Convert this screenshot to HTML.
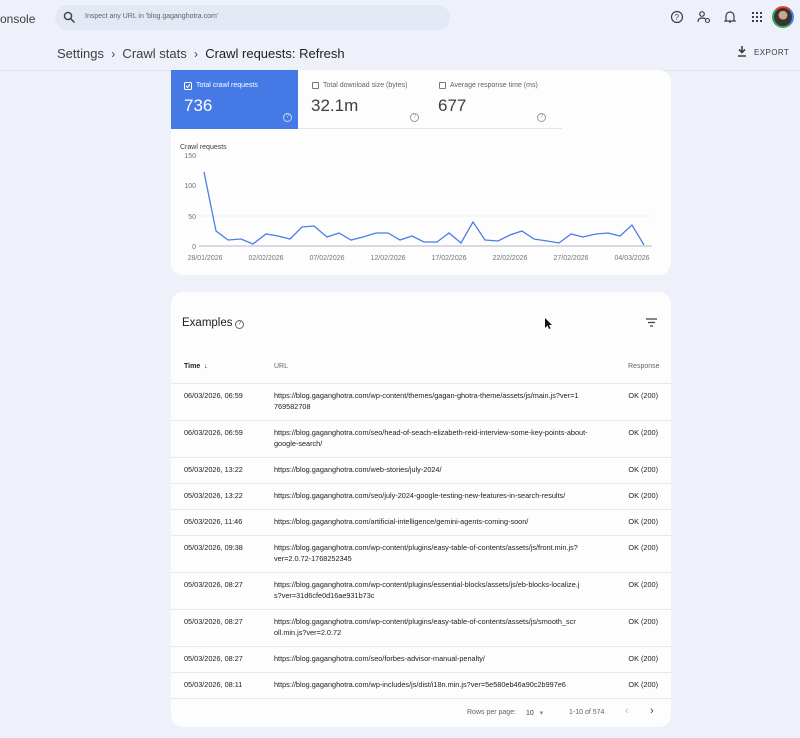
<!DOCTYPE html>
<html><head><meta charset="utf-8"><style>
*{margin:0;padding:0;box-sizing:border-box}
body{width:800px;height:738px;overflow:hidden;background:#eef1f9;font-family:"Liberation Sans",sans-serif;position:relative;color:#202124}
.a{position:absolute}
.card{position:absolute;background:#fdfdfe;border-radius:12px}
.row{position:absolute;left:171px;width:500px;border-top:1px solid #e6e8ee;font-size:7.3px;color:#202124;height:1px}
.row div{position:absolute;top:6px;white-space:nowrap;line-height:11px}
.row .t{left:13px}
.row .u{left:103px}
.row .r{right:13px}
.q{position:absolute;width:9px;height:9px;border:1px solid #999;border-radius:50%;font-size:6px;line-height:7px;text-align:center;color:#999}
</style></head><body>
<div class="a" style="left:0;top:12px;font-size:12px;color:#3c4043">onsole</div>
<div class="a" style="left:55px;top:5px;width:395px;height:25px;background:#e3e8f5;border-radius:13px"></div>
<svg class="a" style="left:63px;top:11px" width="13" height="13" viewBox="0 0 13 13"><circle cx="5" cy="5" r="3.6" fill="none" stroke="#3c4043" stroke-width="1.4"/><line x1="7.6" y1="7.6" x2="11.5" y2="11.5" stroke="#3c4043" stroke-width="1.5"/></svg>
<div class="a" style="left:85px;top:13px;font-size:7px;color:#5f6368">Inspect any URL in 'blog.gaganghotra.com'</div>
<svg class="a" style="left:670px;top:10px" width="14" height="14"><circle cx="7" cy="7" r="5.5" fill="none" stroke="#3c4043" stroke-width="1.2"/><text x="4.6" y="9.8" font-size="8" fill="#3c4043" font-family="Liberation Sans">?</text></svg>
<svg class="a" style="left:697px;top:10px" width="14" height="14"><circle cx="5" cy="4" r="2.3" fill="none" stroke="#3c4043" stroke-width="1.2"/><path d="M1 12c0-3 2-4 4-4s3 .5 3.5 1" fill="none" stroke="#3c4043" stroke-width="1.2"/><circle cx="10.5" cy="10.5" r="2" fill="none" stroke="#3c4043" stroke-width="1.1"/></svg>
<svg class="a" style="left:724px;top:10px" width="12" height="14"><path d="M2 10V6a4 4 0 018 0v4l1 1H1zM5 12h2" fill="none" stroke="#3c4043" stroke-width="1.2"/></svg>
<svg class="a" style="left:752px;top:12px" width="10" height="10" fill="#3c4043"><rect x="0" y="0" width="2" height="2"/><rect x="4" y="0" width="2" height="2"/><rect x="8" y="0" width="2" height="2"/><rect x="0" y="4" width="2" height="2"/><rect x="4" y="4" width="2" height="2"/><rect x="8" y="4" width="2" height="2"/><rect x="0" y="8" width="2" height="2"/><rect x="4" y="8" width="2" height="2"/><rect x="8" y="8" width="2" height="2"/></svg>
<div class="a" style="left:772px;top:6px;width:22px;height:22px;border-radius:50%;border:2px solid #34a853;border-top-color:#ea4335;border-right-color:#4285f4;background:radial-gradient(circle at 50% 40%,#c9a68a 0 30%,#3b3430 32%)"></div>
<div class="a" style="left:57px;top:46px;font-size:13px;color:#3c4043">Settings &nbsp;<span style="font-size:12px">›</span>&nbsp; Crawl stats &nbsp;<span style="font-size:12px">›</span>&nbsp; <span style="color:#202124">Crawl requests: Refresh</span></div>
<svg class="a" style="left:737px;top:46px" width="10" height="11"><path d="M5 0v6M2 3.5L5 6.5 8 3.5M1 10h8" fill="none" stroke="#3c4043" stroke-width="1.6"/></svg>
<div class="a" style="left:754px;top:48px;font-size:8px;color:#3c4043;letter-spacing:.4px">EXPORT</div>
<div class="a" style="left:0;top:70px;width:800px;height:1px;background:#dfe2ea"></div>

<div class="card" style="left:171px;top:70px;width:500px;height:205px;border-radius:0 12px 12px 12px"></div>
<div class="a" style="left:171px;top:70px;width:127px;height:59px;background:#4479e6"></div>
<div class="a" style="left:298px;top:128px;width:264px;height:1px;background:#e3e5ea"></div>
<svg class="a" style="left:184px;top:82px" width="8" height="8"><rect x=".5" y=".5" width="7" height="7" rx="1" fill="none" stroke="#fff"/><path d="M2 4l1.5 1.5L6 2.5" fill="none" stroke="#fff"/></svg>
<div class="a" style="left:196px;top:82px;font-size:7px;color:#fff">Total crawl requests</div>
<div class="a" style="left:184px;top:96px;font-size:17px;color:#fff">736</div>
<div class="q" style="left:283px;top:113px;border-color:#c9d7f7;color:#c9d7f7">?</div>
<div class="a" style="left:312px;top:82px;width:7px;height:7px;border:1px solid #777;border-radius:1px"></div>
<div class="a" style="left:323px;top:82px;font-size:7px;color:#5f6368">Total download size (bytes)</div>
<div class="a" style="left:311px;top:96px;font-size:17px;color:#3c4043">32.1m</div>
<div class="q" style="left:410px;top:113px">?</div>
<div class="a" style="left:439px;top:82px;width:7px;height:7px;border:1px solid #777;border-radius:1px"></div>
<div class="a" style="left:450px;top:82px;font-size:7px;color:#5f6368">Average response time (ms)</div>
<div class="a" style="left:438px;top:96px;font-size:17px;color:#3c4043">677</div>
<div class="q" style="left:537px;top:113px">?</div>

<svg class="a" style="left:170px;top:130px" width="500" height="140" font-family="Liberation Sans" font-size="7" fill="#70757a">
<text x="10" y="19" fill="#3c4043">Crawl requests</text>
<text x="26" y="28" text-anchor="end">150</text><text x="26" y="58" text-anchor="end">100</text><text x="26" y="89" text-anchor="end">50</text><text x="26" y="119" text-anchor="end">0</text>
<line x1="29" y1="86" x2="482" y2="86" stroke="#eceef2"/>
<line x1="29" y1="116" x2="482" y2="116" stroke="#b5b8bd"/>
<polyline fill="none" stroke="#4a7ee8" stroke-width="1.3" points="34,42 46,101 58,110 71,109 83,114 96,104 108,106 120,109 132,97 144,96 157,107 169,103 181,110 193,107 206,103 218,103 230,110 242,106 254,112 267,112 279,103 291,113 303,92 315,110 328,111 340,105 352,101 364,109 377,111 389,113 401,104 413,107 426,104 438,103 450,106 462,95 474,115"/>
<g text-anchor="middle"><text x="35" y="130">28/01/2026</text><text x="96" y="130">02/02/2026</text><text x="157" y="130">07/02/2026</text><text x="218" y="130">12/02/2026</text><text x="279" y="130">17/02/2026</text><text x="340" y="130">22/02/2026</text><text x="401" y="130">27/02/2026</text><text x="462" y="130">04/03/2026</text></g>
</svg>

<div class="card" style="left:171px;top:292px;width:500px;height:435px"></div>
<div class="a" style="left:182px;top:317px;font-size:11.5px;color:#202124">Examples</div>
<div class="q" style="left:235px;top:320px;border-color:#666;color:#666">?</div>
<svg class="a" style="left:646px;top:318px" width="11" height="9"><path d="M0 1h11M2 4.5h7M4 8h3" stroke="#3c4043" stroke-width="1.2"/></svg>
<svg class="a" style="left:544px;top:318px" width="8" height="12"><path d="M1 0v10l2.5-2.5L5 11l1.5-.6L5 7h3z" fill="#111"/></svg>
<div class="a" style="left:184px;top:363px;font-size:7px;font-weight:bold">Time &nbsp;↓</div>
<div class="a" style="left:274px;top:363px;font-size:7px;color:#5f6368">URL</div>
<div class="a" style="left:628px;top:363px;font-size:7px;color:#5f6368">Response</div>

<div class="row" style="top:383px"><div class="t">06/03/2026, 06:59</div><div class="u">https://blog.gaganghotra.com/wp-content/themes/gagan-ghotra-theme/assets/js/main.js?ver=1<br>769582708</div><div class="r">OK (200)</div></div>
<div class="row" style="top:420px"><div class="t">06/03/2026, 06:59</div><div class="u">https://blog.gaganghotra.com/seo/head-of-seach-elizabeth-reid-interview-some-key-points-about-<br>google-search/</div><div class="r">OK (200)</div></div>
<div class="row" style="top:457px"><div class="t">05/03/2026, 13:22</div><div class="u">https://blog.gaganghotra.com/web-stories/july-2024/</div><div class="r">OK (200)</div></div>
<div class="row" style="top:483px"><div class="t">05/03/2026, 13:22</div><div class="u">https://blog.gaganghotra.com/seo/july-2024-google-testing-new-features-in-search-results/</div><div class="r">OK (200)</div></div>
<div class="row" style="top:509px"><div class="t">05/03/2026, 11:46</div><div class="u">https://blog.gaganghotra.com/artificial-intelligence/gemini-agents-coming-soon/</div><div class="r">OK (200)</div></div>
<div class="row" style="top:535px"><div class="t">05/03/2026, 09:38</div><div class="u">https://blog.gaganghotra.com/wp-content/plugins/easy-table-of-contents/assets/js/front.min.js?<br>ver=2.0.72-1768252345</div><div class="r">OK (200)</div></div>
<div class="row" style="top:572px"><div class="t">05/03/2026, 08:27</div><div class="u">https://blog.gaganghotra.com/wp-content/plugins/essential-blocks/assets/js/eb-blocks-localize.j<br>s?ver=31d6cfe0d16ae931b73c</div><div class="r">OK (200)</div></div>
<div class="row" style="top:609px"><div class="t">05/03/2026, 08:27</div><div class="u">https://blog.gaganghotra.com/wp-content/plugins/easy-table-of-contents/assets/js/smooth_scr<br>oll.min.js?ver=2.0.72</div><div class="r">OK (200)</div></div>
<div class="row" style="top:646px"><div class="t">05/03/2026, 08:27</div><div class="u">https://blog.gaganghotra.com/seo/forbes-advisor-manual-penalty/</div><div class="r">OK (200)</div></div>
<div class="row" style="top:672px"><div class="t">05/03/2026, 08:11</div><div class="u">https://blog.gaganghotra.com/wp-includes/js/dist/i18n.min.js?ver=5e580eb46a90c2b997e6</div><div class="r">OK (200)</div></div>
<div class="row" style="top:698px"></div>
<div class="a" style="left:467px;top:709px;font-size:7px;color:#5f6368">Rows per page:</div>
<div class="a" style="left:526px;top:709px;font-size:7px;color:#3c4043">10 &nbsp;&nbsp;<span style="color:#888">▾</span></div>
<div class="a" style="left:569px;top:709px;font-size:7px;color:#5f6368">1-10 of 574</div>
<div class="a" style="left:625px;top:705px;font-size:11px;color:#bbb">‹</div>
<div class="a" style="left:650px;top:705px;font-size:11px;color:#3c4043">›</div>
</body></html>
